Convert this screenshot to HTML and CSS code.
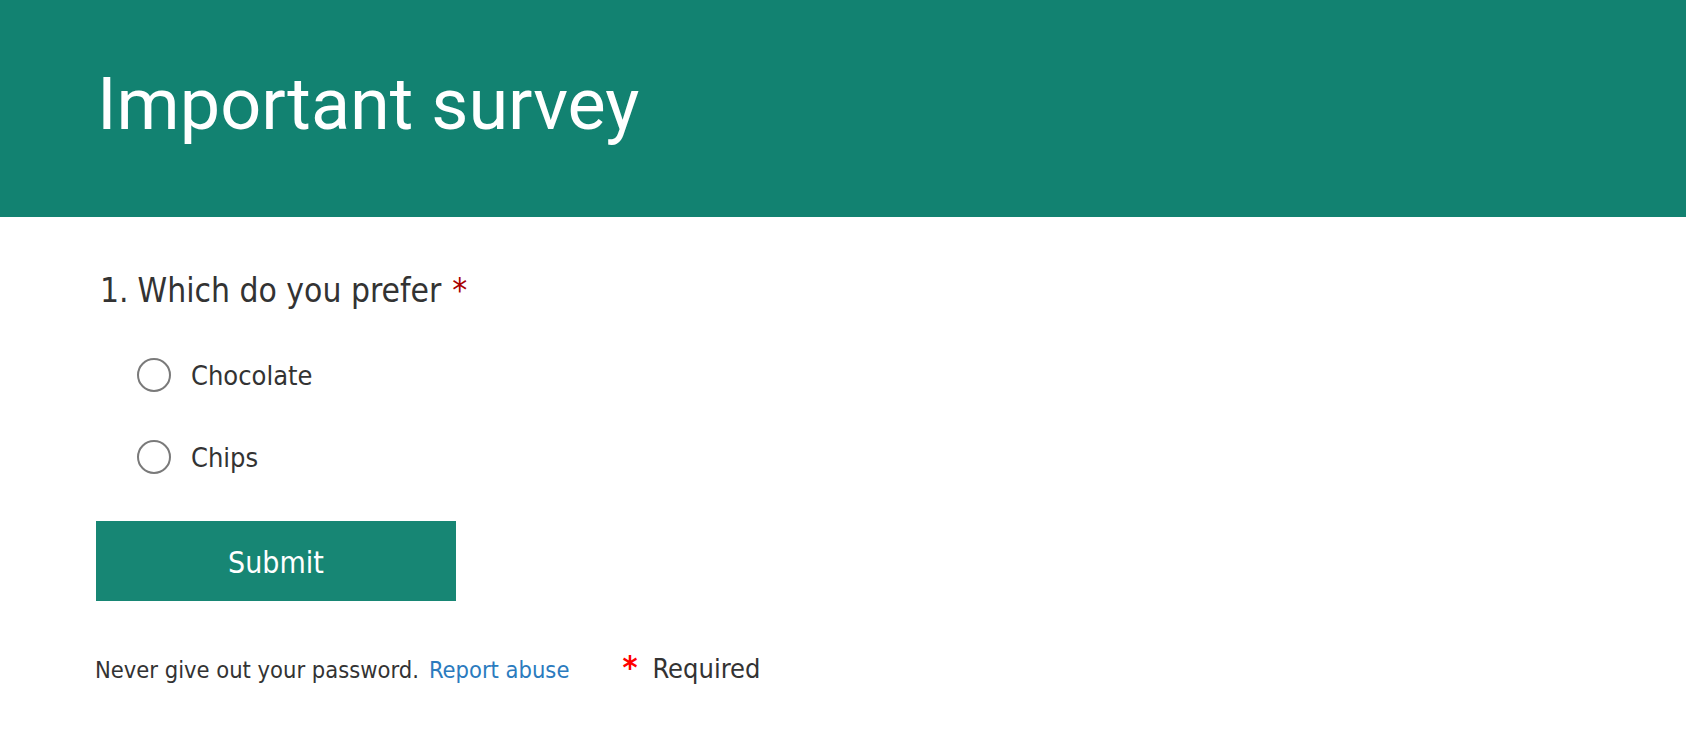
FILE: index.html
```html
<!DOCTYPE html>
<html lang="en">
<head>
<meta charset="utf-8">
<title>Important survey</title>
<link rel="stylesheet" href="styles.css">
</head>
<body>
<header class="banner">
  <h1 class="banner-title">Important survey</h1>
</header>
<main class="form">
  <div class="question">
    <span class="q-num">1.</span><span class="q-text">Which do you prefer</span><span class="q-req">*</span>
  </div>
  <div class="choices">
    <label class="choice"><span class="radio"></span><span class="choice-label">Chocolate</span></label>
    <label class="choice"><span class="radio"></span><span class="choice-label">Chips</span></label>
  </div>
  <button class="submit" type="button">Submit</button>
  <footer class="foot">
    <span class="foot-note">Never give out your password.</span>
    <a class="foot-link" href="#">Report abuse</a>
    <span class="foot-req"><span class="foot-star">*</span>Required</span>
  </footer>
</main>
</body>
</html>
```
FILE: styles.css
```css
html, body {
  margin: 0;
  padding: 0;
  background: #ffffff;
}

body {
  font-family: "DejaVu Sans Condensed", "DejaVu Sans", sans-serif;
  font-stretch: condensed;
  color: #333333;
}

.banner {
  box-sizing: border-box;
  height: 217px;
  background: #128271;
  padding: 69px 0 0 97px;
}

.banner-title {
  margin: 0;
  font-family: Roboto, "Liberation Sans", sans-serif;
  font-stretch: normal;
  font-weight: 400;
  font-size: 72px;
  line-height: 1;
  color: #ffffff;
}

.form {
  padding: 52px 0 0 96px;
  display: flex;
  flex-direction: column;
  align-items: flex-start;
}

.question {
  font-size: 33.3px;
  line-height: 44px;
  padding-left: 4px;
  display: flex;
  align-items: baseline;
}

.q-num {
  margin-right: 9px;
}

.q-req {
  color: #a80000;
  margin-left: 11px;
}

.choices {
  margin-top: 43px;
  padding-left: 41px;
  display: flex;
  flex-direction: column;
  gap: 42px;
}

.choice {
  display: flex;
  align-items: center;
  height: 40px;
  gap: 20px;
}

.radio {
  box-sizing: border-box;
  width: 34px;
  height: 34px;
  border: 2px solid #7a7a7a;
  border-radius: 50%;
  margin-top: -3px;
  background: #ffffff;
}

.choice-label {
  font-size: 27px;
  line-height: 40px;
}

.submit {
  margin-top: 43px;
  width: 360px;
  height: 80px;
  border: none;
  padding: 3px 0 0 0;
  background: #178674;
  color: #ffffff;
  font-family: inherit;
  font-stretch: condensed;
  font-size: 30px;
  line-height: 1;
  cursor: pointer;
}

.foot {
  margin-top: 48px;
  display: flex;
  align-items: baseline;
  line-height: 36px;
  margin-left: -1px;
}

.foot-note {
  font-size: 23.5px;
}

.foot-link {
  font-size: 23.5px;
  color: #2b7bbe;
  text-decoration: none;
  margin-left: 10px;
}

.foot-req {
  font-size: 27px;
  margin-left: 53px;
  display: flex;
  align-items: baseline;
}

.foot-star {
  color: #ff0000;
  font-size: 32px;
  font-weight: bold;
  margin-right: 15px;
}
```
